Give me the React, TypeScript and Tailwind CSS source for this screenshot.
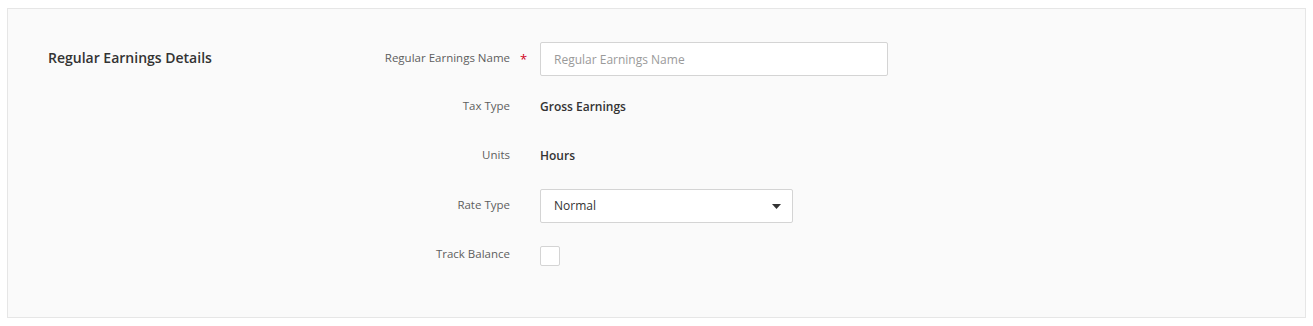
import React from "react";

const Row: React.FC<{ label: string; required?: boolean; children: React.ReactNode; className?: string }> = ({
  label,
  required,
  children,
  className = "",
}) => (
  <div className={`flex items-center h-[34px] ${className}`}>
    <div className="w-[136px] text-right text-[11.5px] text-[#5e5e5e] -mt-[2px]">{label}</div>
    <div className="w-[30px] pl-[10px] text-[13px] text-[#d0021b] leading-none">{required ? "*" : ""}</div>
    <div className="flex items-center">{children}</div>
  </div>
);

export default function App() {
  return (
    <div className="px-[7px] pt-[8px] font-['Open_Sans',sans-serif]">
      <div className="flex border border-[#e6e6e6] bg-[#fafafa] pt-[33px] pb-[45px] pl-[40px]">
        {/* section title */}
        <div className="w-[326px] h-[34px] flex items-center text-[14px] font-semibold text-[#333] -mt-[2px]">
          Regular Earnings Details
        </div>

        <div className="flex flex-col gap-[15px]">
          <Row label="Regular Earnings Name" required>
            <input
              type="text"
              placeholder="Regular Earnings Name"
              className="w-[348px] h-[34px] border border-[#d4d4d4] bg-white px-[13px] text-[12px] text-[#333] placeholder:text-[#9a9a9a] outline-none rounded-[2px]"
            />
          </Row>
          <Row label="Tax Type" className="-mt-[1px]">
            <span className="text-[12px] font-semibold text-[#333]">Gross Earnings</span>
          </Row>
          <Row label="Units">
            <span className="text-[12px] font-semibold text-[#333]">Hours</span>
          </Row>
          <Row label="Rate Type" className="mt-[1px]">
            <div className="w-[253px] h-[34px] border border-[#d4d4d4] bg-white rounded-[2px] flex items-center justify-between pl-[13px] pr-[11px] text-[12px] text-[#333]">
              <span>Normal</span>
              <svg width="9" height="5" viewBox="0 0 9 5">
                <path d="M0 0h9L4.5 5z" fill="#333" />
              </svg>
            </div>
          </Row>
          <Row label="Track Balance">
            <div className="w-[20px] h-[20px] border border-[#d4d4d4] bg-white rounded-[2px] mt-[2px]" />
          </Row>
        </div>
      </div>
    </div>
  );
}
